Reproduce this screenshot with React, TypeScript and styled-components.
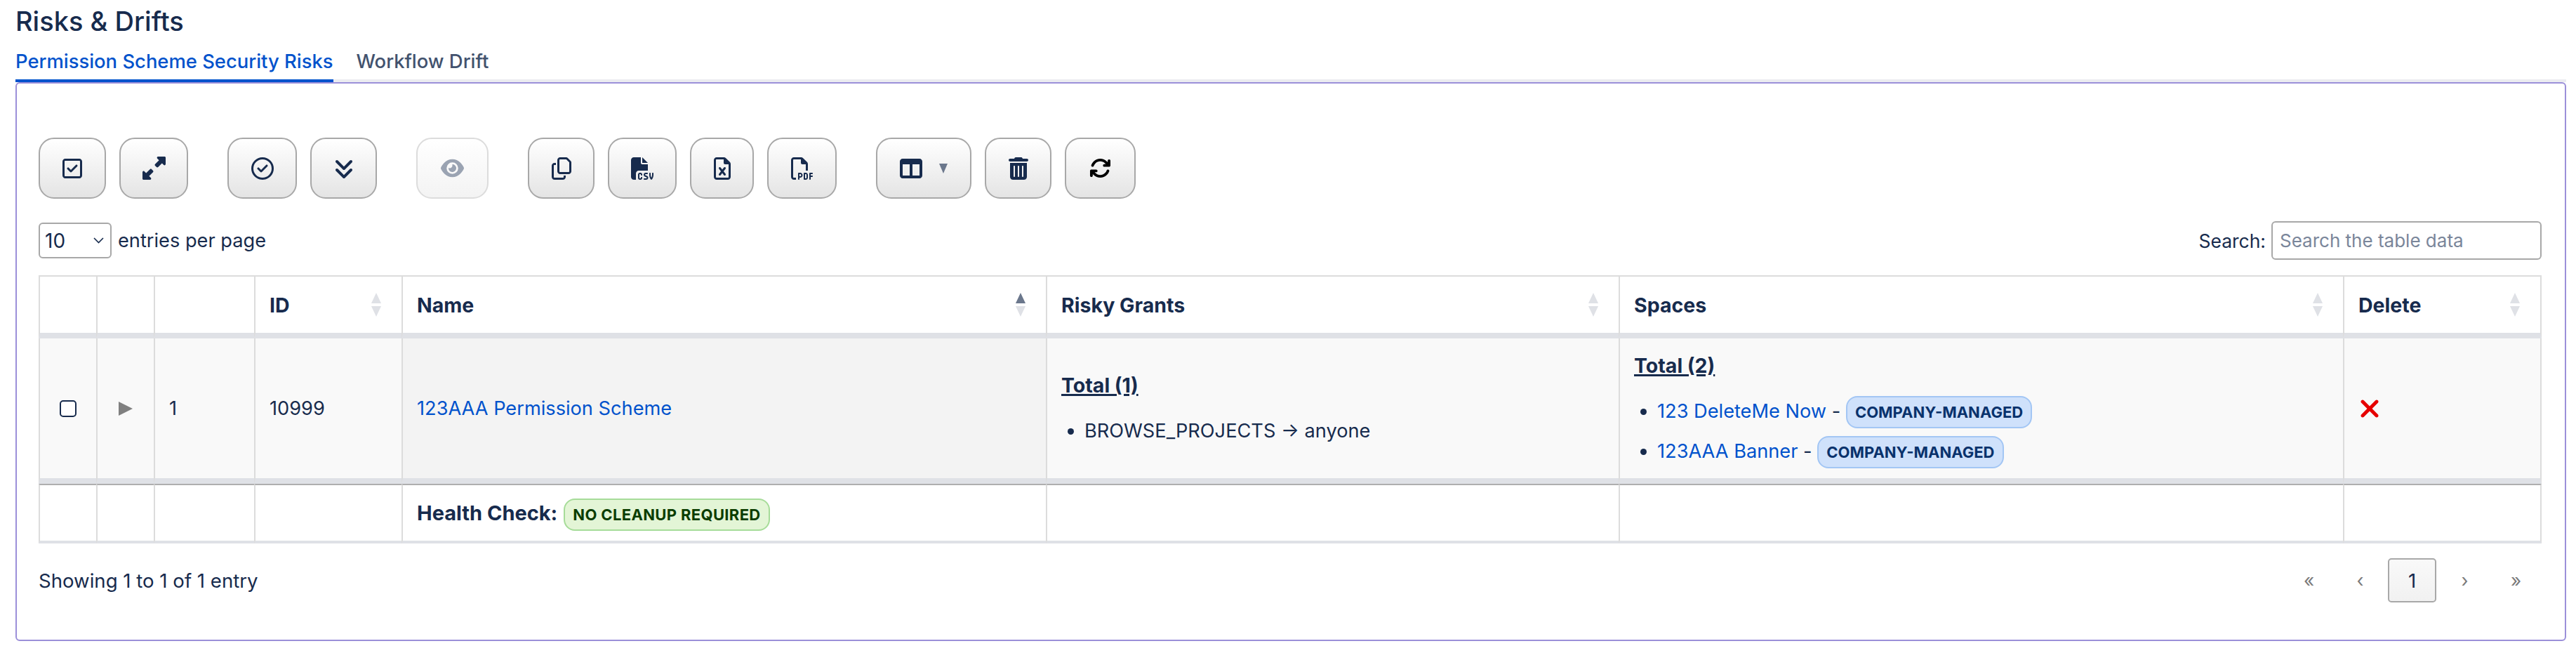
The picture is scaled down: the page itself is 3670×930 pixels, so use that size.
import * as React from "react";
import styled, { createGlobalStyle } from "styled-components";
import {
  FaRegSquareCheck,
  FaUpRightAndDownLeftFromCenter,
  FaRegCircleCheck,
  FaAnglesDown,
  FaEye,
  FaRegCopy,
  FaFileCsv,
  FaRegFileExcel,
  FaRegFilePdf,
  FaTableColumns,
  FaTrashCan,
  FaArrowsRotate,
  FaXmark,
} from "react-icons/fa6";

const navy = "#172b4d";
const blue = "#0052cc";
const line = "#dcdcdc";
const heavy = "#dfe1e6";

const GlobalStyle = createGlobalStyle`
  html, body {
    margin: 0;
    background: #ffffff;
    color: ${navy};
    font-family: Inter, "Liberation Sans", sans-serif;
  }
`;

const Page = styled.div`
  width: 3670px;
  height: 930px;
  padding: 0 14px 0 22px;
  box-sizing: border-box;
  overflow: hidden;
`;

const Title = styled.h1`
  margin: 0;
  padding-top: 9px;
  height: 56px;
  box-sizing: border-box;
  font-size: 38px;
  line-height: 42px;
  font-weight: 500;
`;

const Tabs = styled.div`
  display: flex;
  height: 61px;
  box-sizing: border-box;
  border-bottom: 4px solid #ebecf0;
`;

const Tab = styled.div<{ $active?: boolean }>`
  height: 61px;
  box-sizing: border-box;
  margin-right: 33px;
  padding-top: 13px;
  font-size: 27.4px;
  line-height: 36px;
  font-weight: 500;
  color: ${(p) => (p.$active ? blue : "#42526e")};
  border-bottom: 4px solid ${(p) => (p.$active ? blue : "transparent")};
`;

const Panel = styled.div`
  height: 796px;
  box-sizing: border-box;
  padding: 77px 33px 0 31px;
  border: 2px solid #9b8fd9;
  border-radius: 6px;
`;

const Toolbar = styled.div`
  display: flex;
  gap: 56px;
  height: 87px;
`;

const ButtonGroup = styled.div`
  display: flex;
  gap: 19px;
`;

const ToolButton = styled.div<{ $w: number; $disabled?: boolean }>`
  width: ${(p) => p.$w}px;
  height: 87px;
  box-sizing: border-box;
  display: flex;
  align-items: center;
  justify-content: center;
  gap: 24px;
  border: 2px solid ${(p) => (p.$disabled ? "#dcdcdc" : "#a8a8a8")};
  border-radius: 22px;
  color: ${navy};
  background: linear-gradient(#ffffff, ${(p) => (p.$disabled ? "#f3f3f3" : "#e4e4e4")});

  svg {
    display: block;
  }
`;

const Caret = styled.span`
  width: 0;
  height: 0;
  border-left: 6.5px solid transparent;
  border-right: 6.5px solid transparent;
  border-top: 14px solid #6b778c;
`;

const Controls = styled.div`
  display: flex;
  align-items: center;
  justify-content: space-between;
  height: 55px;
  margin-top: 32px;
  margin-bottom: 22px;
`;

const Entries = styled.div`
  display: flex;
  align-items: center;
  gap: 9px;
  font-size: 27.2px;
`;

const PageSize = styled.div`
  width: 104px;
  height: 51px;
  box-sizing: border-box;
  display: flex;
  align-items: center;
  justify-content: space-between;
  padding: 0 9px 0 7px;
  border: 2px solid #a8a8a8;
  border-radius: 6px;
  background: #ffffff;
  font-size: 28px;
`;

const SearchBox = styled.div`
  display: flex;
  align-items: center;
  gap: 8px;
  font-size: 26.5px;
`;

const SearchInput = styled.input`
  width: 385px;
  height: 55px;
  box-sizing: border-box;
  padding: 0 10px;
  border: 2px solid #a8a8a8;
  border-radius: 6px;
  font-family: inherit;
  font-size: 26px;
  color: ${navy};
  outline: none;

  &::placeholder {
    color: #7a869a;
    opacity: 1;
  }
`;

const Table = styled.table`
  width: 3566px;
  border-collapse: separate;
  border-spacing: 0;
  table-layout: fixed;
  font-size: 27.2px;
`;

const HeadRow = styled.tr`
  height: 90px;
`;

const HeadCell = styled.th`
  position: relative;
  box-sizing: border-box;
  padding: 0 0 0 20px;
  text-align: left;
  vertical-align: middle;
  font-size: 28.5px;
  font-weight: 700;
  border-top: 2px solid ${line};
  border-left: 2px solid ${line};
  border-bottom: 8px solid ${heavy};

  &:last-child {
    border-right: 2px solid ${line};
  }
`;

const SortIcons = styled.span`
  position: absolute;
  right: 29px;
  top: 23px;
  display: flex;
  flex-direction: column;
  gap: 4px;
`;

const SortArrow = styled.span<{ $down?: boolean; $on?: boolean }>`
  width: 0;
  height: 0;
  border-left: 7px solid transparent;
  border-right: 7px solid transparent;
  ${(p) => (p.$down ? "border-top" : "border-bottom")}: 15px solid ${(p) => (p.$on ? "#6b778c" : heavy)};
`;

const BodyRow = styled.tr`
  height: 207px;
`;

const BodyCell = styled.td<{ $sorted?: boolean }>`
  box-sizing: border-box;
  padding: 0 0 0 20px;
  vertical-align: middle;
  background: ${(p) => (p.$sorted ? "#f3f3f3" : "#f9f9f9")};
  border-left: 2px solid ${line};
  border-bottom: 8px solid ${heavy};

  &:last-child {
    border-right: 2px solid ${line};
  }
`;

const FootRow = styled.tr`
  height: 85px;
`;

const FootCell = styled.td`
  box-sizing: border-box;
  padding: 0 0 0 20px;
  vertical-align: middle;
  font-size: 29px;
  font-weight: 700;
  border-top: 2px solid #aeaeae;
  border-left: 2px solid ${line};
  border-bottom: 4px solid ${heavy};

  &:last-child {
    border-right: 2px solid ${line};
  }
`;

const RowCheck = styled.span`
  display: block;
  width: 24px;
  height: 24px;
  margin-left: 8px;
  box-sizing: border-box;
  border: 2px solid ${navy};
  border-radius: 5px;
  background: #ffffff;
`;

const Expander = styled.span`
  display: block;
  width: 0;
  height: 0;
  margin-left: 10px;
  border-top: 10px solid transparent;
  border-bottom: 10px solid transparent;
  border-left: 20px solid #808080;
`;

const NameLink = styled.a`
  color: ${blue};
  text-decoration: none;
`;

const Total = styled.div`
  font-size: 28.5px;
  font-weight: 700;
  text-decoration: underline;
  text-decoration-thickness: 3px;
  line-height: 34px;
`;

const Items = styled.ul`
  margin: 31px 0 0;
  padding: 0 0 0 33px;
  line-height: 34px;
`;

const Item = styled.li`
  height: 34px;
  white-space: nowrap;

  & + & {
    margin-top: 23px;
  }
`;

const Badge = styled.span<{ $green?: boolean }>`
  display: inline-block;
  height: 46px;
  margin: -8px 0;
  box-sizing: border-box;
  padding: 0 11px;
  line-height: 42px;
  font-size: 22px;
  font-weight: 700;
  letter-spacing: ${(p) => (p.$green ? "0.35px" : "0")};
  vertical-align: middle;
  border-radius: 16px;
  white-space: nowrap;
  border: 2px solid ${(p) => (p.$green ? "#a6dc99" : "#a3c6f4")};
  background: ${(p) => (p.$green ? "#e3f5d6" : "#cfe1fb")};
  color: ${(p) => (p.$green ? "#0b3d00" : "#09326c")};
`;

const HealthBadge = styled(Badge)`
  margin-left: 9px;
`;

const Footer = styled.div`
  display: flex;
  align-items: center;
  justify-content: space-between;
  height: 63px;
  margin-top: 21px;
  font-size: 27.6px;
`;

const Pager = styled.div`
  display: flex;
  align-items: center;
`;

const PagerLink = styled.span`
  width: 73px;
  text-align: center;
  font-size: 26px;
  color: #7a7a7a;
`;

const PagerCurrent = styled.span`
  width: 69px;
  height: 63px;
  margin: 0 4px 0 3px;
  box-sizing: border-box;
  display: flex;
  align-items: center;
  justify-content: center;
  border: 2px solid #a8a8a8;
  border-radius: 5px;
  background: linear-gradient(#f9f9f9, #f1f1f1);
  color: ${navy};
`;

const columns = [82, 82, 143, 210, 918, 816, 1032, 283];

const SortMark = ({ on }: { on?: boolean }): JSX.Element => (
  <SortIcons>
    <SortArrow $on={on} />
    <SortArrow $down />
  </SortIcons>
);

const App = (): JSX.Element => (
  <Page>
    <GlobalStyle />
    <Title>Risks &amp; Drifts</Title>
    <Tabs>
      <Tab $active>Permission Scheme Security Risks</Tab>
      <Tab>Workflow Drift</Tab>
    </Tabs>
    <Panel>
      <Toolbar>
        <ButtonGroup>
          <ToolButton $w={96}><FaRegSquareCheck size={32} /></ToolButton>
          <ToolButton $w={98}><FaUpRightAndDownLeftFromCenter size={33} /></ToolButton>
        </ButtonGroup>
        <ButtonGroup>
          <ToolButton $w={99}><FaRegCircleCheck size={32} /></ToolButton>
          <ToolButton $w={95}><FaAnglesDown size={32} /></ToolButton>
        </ButtonGroup>
        <ButtonGroup>
          <ToolButton $w={103} $disabled><FaEye size={33} color="#9aa3b2" /></ToolButton>
        </ButtonGroup>
        <ButtonGroup>
          <ToolButton $w={95}><FaRegCopy size={32} /></ToolButton>
          <ToolButton $w={98}><FaFileCsv size={32} /></ToolButton>
          <ToolButton $w={91}><FaRegFileExcel size={32} /></ToolButton>
          <ToolButton $w={99}><FaRegFilePdf size={32} /></ToolButton>
        </ButtonGroup>
        <ButtonGroup>
          <ToolButton $w={136}><FaTableColumns size={32} /><Caret /></ToolButton>
          <ToolButton $w={95}><FaTrashCan size={32} /></ToolButton>
          <ToolButton $w={101}><FaArrowsRotate size={31} color="#000000" /></ToolButton>
        </ButtonGroup>
      </Toolbar>
      <Controls>
        <Entries>
          <PageSize>
            10
            <svg width="15" height="9" viewBox="0 0 15 9" fill="none" stroke={navy} strokeWidth="1.6">
              <path d="M1 1l6.5 6.5L14 1" />
            </svg>
          </PageSize>
          entries per page
        </Entries>
        <SearchBox>
          Search:
          <SearchInput placeholder="Search the table data" readOnly />
        </SearchBox>
      </Controls>
      <Table>
        <colgroup>
          {columns.map((w, i) => (
            <col key={i} width={w} />
          ))}
        </colgroup>
        <thead>
          <HeadRow>
            <HeadCell />
            <HeadCell />
            <HeadCell />
            <HeadCell>ID<SortMark /></HeadCell>
            <HeadCell>Name<SortMark on /></HeadCell>
            <HeadCell>Risky Grants<SortMark /></HeadCell>
            <HeadCell>Spaces<SortMark /></HeadCell>
            <HeadCell>Delete<SortMark /></HeadCell>
          </HeadRow>
        </thead>
        <tbody>
          <BodyRow>
            <BodyCell><RowCheck /></BodyCell>
            <BodyCell><Expander /></BodyCell>
            <BodyCell>1</BodyCell>
            <BodyCell>10999</BodyCell>
            <BodyCell $sorted><NameLink href="#">123AAA Permission Scheme</NameLink></BodyCell>
            <BodyCell>
              <Total>Total (1)</Total>
              <Items>
                <Item>BROWSE_PROJECTS → anyone</Item>
              </Items>
            </BodyCell>
            <BodyCell>
              <Total>Total (2)</Total>
              <Items>
                <Item><NameLink href="#">123 DeleteMe Now</NameLink> - <Badge>COMPANY-MANAGED</Badge></Item>
                <Item><NameLink href="#">123AAA Banner</NameLink> - <Badge>COMPANY-MANAGED</Badge></Item>
              </Items>
            </BodyCell>
            <BodyCell><FaXmark size={40} color="#e60000" style={{ display: "block", marginLeft: -4 }} /></BodyCell>
          </BodyRow>
        </tbody>
        <tfoot>
          <FootRow>
            <FootCell />
            <FootCell />
            <FootCell />
            <FootCell />
            <FootCell>Health Check:<HealthBadge $green>NO CLEANUP REQUIRED</HealthBadge></FootCell>
            <FootCell />
            <FootCell />
            <FootCell />
          </FootRow>
        </tfoot>
      </Table>
      <Footer>
        <span>Showing 1 to 1 of 1 entry</span>
        <Pager>
          <PagerLink>«</PagerLink>
          <PagerLink>‹</PagerLink>
          <PagerCurrent>1</PagerCurrent>
          <PagerLink>›</PagerLink>
          <PagerLink>»</PagerLink>
        </Pager>
      </Footer>
    </Panel>
  </Page>
);

export default App;
